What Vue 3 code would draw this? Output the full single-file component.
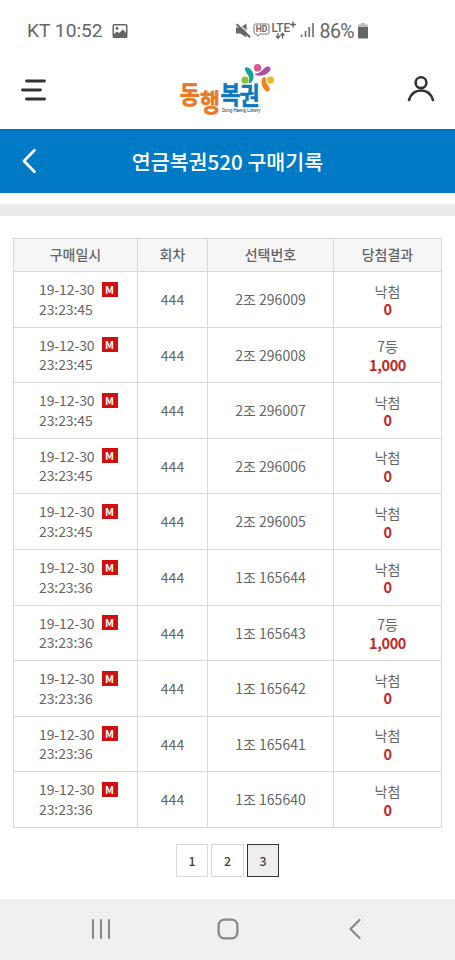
<script setup>
import { ref } from 'vue'

// 구매 기록 목록
const records = ref([
  { date: '19-12-30', time: '23:23:45', round: '444', number: '2조 296009', result: '낙첨', prize: '0' },
  { date: '19-12-30', time: '23:23:45', round: '444', number: '2조 296008', result: '7등', prize: '1,000' },
  { date: '19-12-30', time: '23:23:45', round: '444', number: '2조 296007', result: '낙첨', prize: '0' },
  { date: '19-12-30', time: '23:23:45', round: '444', number: '2조 296006', result: '낙첨', prize: '0' },
  { date: '19-12-30', time: '23:23:45', round: '444', number: '2조 296005', result: '낙첨', prize: '0' },
  { date: '19-12-30', time: '23:23:36', round: '444', number: '1조 165644', result: '낙첨', prize: '0' },
  { date: '19-12-30', time: '23:23:36', round: '444', number: '1조 165643', result: '7등', prize: '1,000' },
  { date: '19-12-30', time: '23:23:36', round: '444', number: '1조 165642', result: '낙첨', prize: '0' },
  { date: '19-12-30', time: '23:23:36', round: '444', number: '1조 165641', result: '낙첨', prize: '0' },
  { date: '19-12-30', time: '23:23:36', round: '444', number: '1조 165640', result: '낙첨', prize: '0' }
])

const pages = [1, 2, 3]
const currentPage = ref(3)
</script>

<template>
  <div class="screen">
    <!-- 상태 표시줄 -->
    <div class="status-bar">
      <div class="status-left">
        <span class="carrier">KT 10:52</span>
        <svg width="16" height="16" viewBox="0 0 16 16">
          <path fill="#666" fill-rule="evenodd" d="M2 1h12a1.500 1.500 0 0 1 1.500 1.500v11A1.500 1.500 0 0 1 14 15H2A1.500 1.500 0 0 1 .5 13.500v-11A1.500 1.500 0 0 1 2 1ZM2 2.500v8.500l3-2.500 2 1.500 4-3.500 3 3.500V2.500ZM5 3.800a1.500 1.500 0 1 1 0 3 1.500 1.500 0 0 1 0-3Z" />
        </svg>
      </div>
      <div class="status-right">
        <svg class="icon-mute" width="15" height="16" viewBox="0 0 15 16">
          <path fill="#666" d="M0 4.500H4.500l6-4v14l-6-4H0Z" />
          <path d="M1.800 0 15.300 13" stroke="#fff" stroke-width="1.300" />
          <path d="M.5 1.200 14 14.300" stroke="#666" stroke-width="2" />
        </svg>
        <svg class="icon-hd" width="17" height="15" viewBox="0 0 17 15">
          <path d="M2.500 1h12A1.500 1.500 0 0 1 16 2.500v7a1.500 1.500 0 0 1-1.500 1.500H7l-2 2.200L3.700 11H2.500A1.500 1.500 0 0 1 1 9.500v-7A1.500 1.500 0 0 1 2.500 1Z" fill="none" stroke="#777" stroke-width="1" />
          <text x="2.700" y="9.200" textLength="11.600" lengthAdjust="spacingAndGlyphs" class="svg-label hd">HD</text>
        </svg>
        <svg class="icon-lte" width="26" height="20" viewBox="0 0 26 20">
          <text x="0.500" y="10.500" textLength="18.500" lengthAdjust="spacingAndGlyphs" class="svg-label lte">LTE</text>
          <path d="M22 .5v6M19 3.500h6" stroke="#666" stroke-width="1.400" />
          <path d="M7 12v5M5 15l2 2.300L9 15M11.500 17.500v-5M9.500 14.500l2-2.300 2 2.300" stroke="#666" stroke-width="1.300" fill="none" />
        </svg>
        <svg class="icon-signal" width="15" height="15" viewBox="0 0 15 15">
          <path d="M1.500 11.500V14M5.500 8v6M9.200 4v10M13 0v14" stroke="#777" stroke-width="1.700" />
        </svg>
        <span class="percent">86%</span>
        <svg class="icon-battery" width="10" height="16" viewBox="0 0 10 16">
          <path fill="#bbb" d="M3 0h4v1.500h3V5H0V1.500h3Z" />
          <path fill="#666" d="M0 4h10v10.500a1 1 0 0 1-1 1H1a1 1 0 0 1-1-1Z" />
        </svg>
      </div>
    </div>

    <!-- 상단 헤더 -->
    <header class="top-header">
      <svg class="menu" width="26" height="22" viewBox="0 0 26 22">
        <path d="M5.500 2h18M1.500 11h18M5.500 20h18" stroke="#333" stroke-width="2.800" stroke-linecap="round" />
      </svg>
      <svg class="logo" width="96" height="54" viewBox="0 0 96 54">
        <g class="logo-text">
          <text transform="translate(-0.200 41.200) scale(.87 1)" fill="#e67a25" stroke="#e67a25">동</text>
          <text transform="translate(20 48.500) scale(.87 1)" fill="#e67a25" stroke="#e67a25">행</text>
          <text transform="translate(40.500 41.200) scale(.87 1)" fill="#0e78bd" stroke="#0e78bd">복</text>
          <text transform="translate(59.600 41.500) scale(.87 1)" fill="#0e78bd" stroke="#0e78bd">권</text>
        </g>
        <text x="42" y="49" textLength="38.500" lengthAdjust="spacingAndGlyphs" class="logo-sub">Dong Haeng Lottery</text>
        <circle cx="77.500" cy="4.700" r="3.700" fill="#e0568f" />
        <circle cx="65" cy="17.200" r="3.600" fill="#96c03c" />
        <circle cx="90.500" cy="17" r="3.500" fill="#eeb815" />
        <path d="M64.800 6.500C64.300 4 66.800 3.500 69.300 5.200 74.800 9 74.800 16 70.800 20 68.800 21 68.300 19 69.100 17 69.800 12.500 65.800 10 64.800 6.500Z" fill="#1ba597" />
        <path d="M74.300 10.200C77.500 11.200 80.500 9.500 84.500 5 87.500 2.500 91.500 3.500 90.500 7 87.500 12.500 78 15 74.300 10.200Z" fill="#ab5299" />
        <path d="M82.500 15C84 13.300 86 14 86 17 86 21 88.500 22.500 89.800 25 90.500 28 87.500 29.800 85.500 27.800 81.500 24 80.500 18.500 82.500 15Z" fill="#ee861c" />
      </svg>
      <svg class="user" width="28" height="28" viewBox="0 0 28 28">
        <circle cx="14" cy="7.700" r="5.400" fill="none" stroke="#333" stroke-width="2.600" />
        <path d="M2 25C4 18.500 8 15.500 14 15.500S24 18.500 26 25" fill="none" stroke="#333" stroke-width="2.600" stroke-linecap="round" />
      </svg>
    </header>

    <!-- 페이지 제목 -->
    <div class="title-bar">
      <svg class="back" width="16" height="26" viewBox="0 0 16 26">
        <path d="M13.500 2.200 3 13l10.500 10.800" fill="none" stroke="#fff" stroke-width="2.700" stroke-linecap="round" stroke-linejoin="round" />
      </svg>
      <h1>연금복권520 구매기록</h1>
    </div>
    <div class="divider"></div>

    <!-- 구매 기록 표 -->
    <div class="record-table">
      <div class="row head">
        <div class="cell">구매일시</div>
        <div class="cell">회차</div>
        <div class="cell">선택번호</div>
        <div class="cell">당첨결과</div>
      </div>
      <div v-for="(item, i) in records" :key="i" class="row">
        <div class="cell date-cell">
          <div class="date-line">{{ item.date }}<span class="badge">M</span></div>
          <div class="date-line">{{ item.time }}</div>
        </div>
        <div class="cell">{{ item.round }}</div>
        <div class="cell">{{ item.number }}</div>
        <div class="cell result-cell">
          <span>{{ item.result }}</span>
          <strong>{{ item.prize }}</strong>
        </div>
      </div>
    </div>

    <!-- 페이지 번호 -->
    <div class="pagination">
      <button
        v-for="page in pages"
        :key="page"
        type="button"
        class="page-btn"
        :class="{ active: page === currentPage }"
        @click="currentPage = page"
      >{{ page }}</button>
    </div>

    <!-- 하단 내비게이션 -->
    <nav class="nav-bar">
      <svg width="20" height="22" viewBox="0 0 20 22">
        <path d="M2 2v18M10 2v18M18 2v18" stroke="#8a8a8a" stroke-width="2.200" stroke-linecap="round" />
      </svg>
      <svg class="nav-home" width="22" height="22" viewBox="0 0 22 22">
        <rect x="1.600" y="1.600" width="18.800" height="18.800" rx="5.800" fill="none" stroke="#8a8a8a" stroke-width="2.300" />
      </svg>
      <svg width="14" height="22" viewBox="0 0 14 22">
        <path d="M11.500 2 2.500 11l9 9" fill="none" stroke="#8a8a8a" stroke-width="2.200" stroke-linecap="round" />
      </svg>
    </nav>
  </div>
</template>

<style>
body {
  margin: 0;
  background: #fff;
}
</style>

<style scoped>
.screen {
  display: flex;
  flex-direction: column;
  width: 455px;
  height: 960px;
  overflow: hidden;
  background: #fff;
  font-family: "Noto Sans CJK KR", sans-serif;
  color: #666;
}
svg {
  display: block;
  flex: none;
}

/* 상태 표시줄 */
.status-bar {
  display: flex;
  justify-content: space-between;
  height: 61px;
  padding: 0 87px 0 27px;
  box-sizing: border-box;
  font-family: Roboto, sans-serif;
  color: #666;
}
.status-left,
.status-right {
  display: flex;
  align-items: center;
}
.carrier {
  margin-right: 9px;
  font-size: 19.2px;
}
.percent {
  margin: 1px 4px 0 5px;
  font-size: 19.5px;
  letter-spacing: -0.6px;
}
.icon-hd { margin-left: 2px; }
.icon-lte { margin-left: 1px; }
.icon-signal { margin-left: 3px; }
.svg-label {
  font-family: Roboto, sans-serif;
  fill: #666;
}
.hd {
  font-size: 9px;
  font-weight: 700;
}
.lte {
  font-size: 12px;
  font-weight: 500;
}

/* 상단 헤더 */
.top-header {
  display: flex;
  align-items: flex-start;
  justify-content: space-between;
  height: 68px;
  padding: 2px 20px 0 20.5px;
  box-sizing: border-box;
}
.menu { margin-top: 15.5px; }
.logo {
  margin-left: 2.5px;
  overflow: visible;
}
.user { margin-top: 12px; }
.logo-text text {
  font-family: "Noto Sans CJK KR", sans-serif;
  font-size: 25px;
  font-weight: 700;
  stroke-width: 0.6;
  stroke-linejoin: round;
}
.logo-sub {
  font-family: "Liberation Sans", sans-serif;
  font-size: 5px;
  fill: #222;
}

/* 페이지 제목 */
.title-bar {
  display: grid;
  grid-template-columns: 66px 1fr 66px;
  align-items: center;
  height: 64px;
  background: #007ac4;
}
.back { margin-left: 21px; }
.title-bar h1 {
  margin: 0;
  font-size: 20.6px;
  font-weight: 500;
  line-height: 64px;
  text-align: center;
  color: #fff;
}
.divider {
  flex: none;
  height: 12px;
  margin-top: 11px;
  background: #e8ecec;
}

/* 표 */
.record-table {
  margin: 22px 13px 0;
  border-top: 1px solid #d9d9d9;
  border-left: 1px solid #d9d9d9;
}
.row {
  display: grid;
  grid-template-columns: 124px 70px 126px 1fr;
  height: 55.6px;
  font-size: 14px;
}
.row.head {
  height: 33px;
  background: #f6f6f6;
  font-weight: 500;
}
.cell {
  display: flex;
  align-items: center;
  justify-content: center;
  box-sizing: border-box;
  padding-bottom: 0.5px;
  border-right: 1px solid #d9d9d9;
  border-bottom: 1px solid #d9d9d9;
}
.head .cell { padding-bottom: 1.5px; }
.date-cell {
  flex-direction: column;
  align-items: flex-start;
  padding-left: 25px;
  padding-bottom: 1px;
}
.date-line {
  display: flex;
  align-items: center;
  height: 19.5px;
  letter-spacing: -0.1px;
}
.badge {
  width: 16px;
  height: 15px;
  margin-left: 7px;
  background: #d01010;
  font-size: 10.500px;
  font-weight: 700;
  line-height: 15px;
  text-align: center;
  color: #fff;
}
.result-cell {
  flex-direction: column;
  padding: 2px 0 0;
  line-height: 17.7px;
}
.result-cell strong {
  font-size: 14.5px;
  font-weight: 700;
  letter-spacing: -0.4px;
  color: #c02828;
}

/* 페이지 번호 */
.pagination {
  display: flex;
  justify-content: center;
  gap: 3px;
  margin-top: 16px;
}
.page-btn {
  width: 32.5px;
  height: 33px;
  padding: 0;
  border: 1px solid #d9d9d9;
  background: #fff;
  font-family: inherit;
  font-size: 12.5px;
  font-weight: 500;
  color: #444;
}
.page-btn.active {
  border-color: #333;
  background: #eee;
}

/* 하단 내비게이션 */
.nav-bar {
  display: flex;
  align-items: center;
  justify-content: space-between;
  height: 61px;
  margin-top: auto;
  padding: 0 93px 2px 91px;
  box-sizing: border-box;
  background: #f0f0f0;
}
.nav-home { margin-right: 4px; }
</style>
